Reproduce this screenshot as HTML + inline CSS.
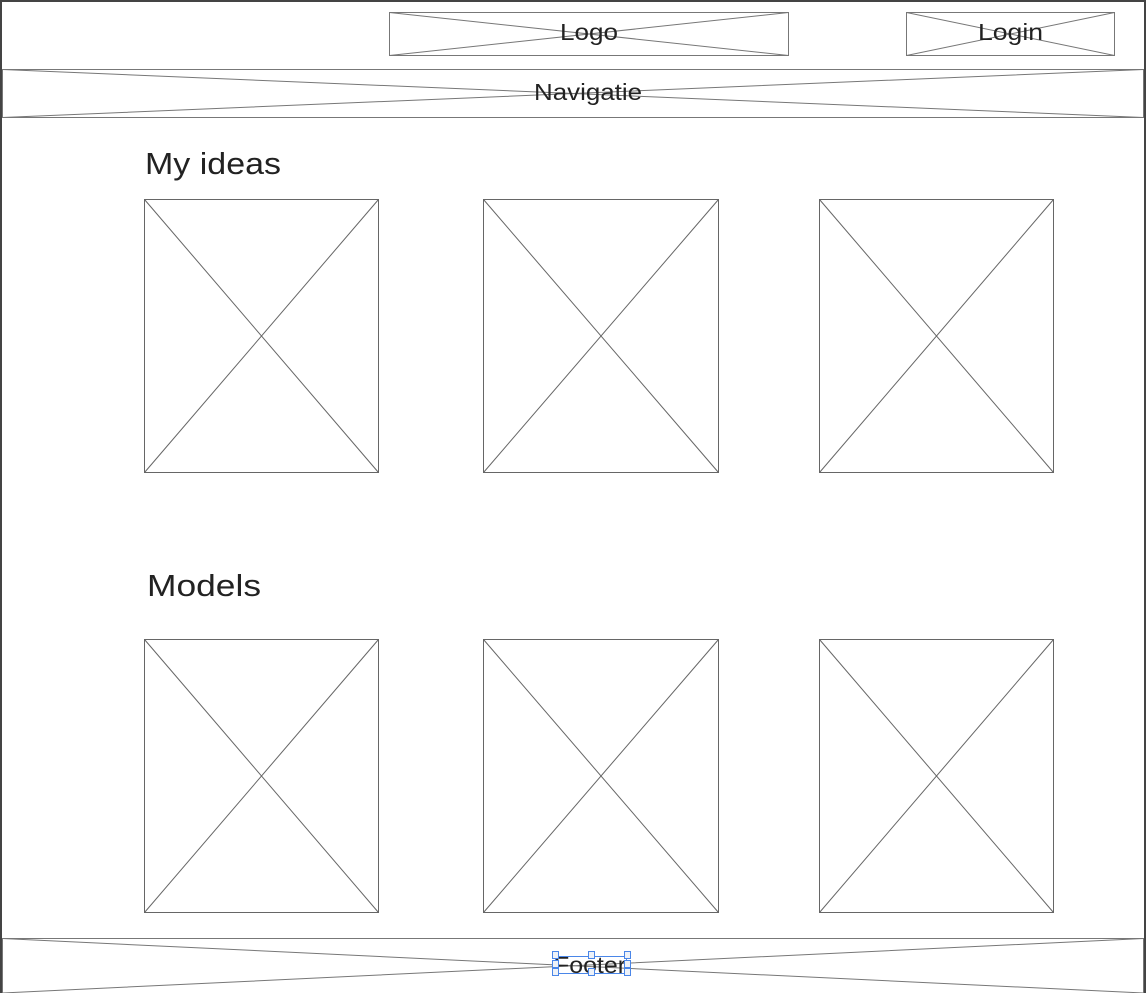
<!DOCTYPE html>
<html><head><meta charset="utf-8"><style>
html,body{margin:0;padding:0;background:#fff;}
svg{display:block}
text{font-family:"Liberation Sans",sans-serif;fill:#222;}
</style></head><body>
<svg width="1146" height="993" viewBox="0 0 1146 993" xmlns="http://www.w3.org/2000/svg">
<rect x="0" y="0" width="1146" height="993" fill="#fff"/>
<rect x="1" y="1" width="1144" height="1000" fill="none" stroke="#444" stroke-width="2"/>
<g fill="none" stroke="#777" stroke-width="1">
<rect x="389.5" y="12.5" width="399" height="43"/>
<path d="M389.5 12.5 L788.5 55.5 M788.5 12.5 L389.5 55.5"/>
<rect x="906.5" y="12.5" width="208" height="43"/>
<path d="M906.5 12.5 L1114.5 55.5 M1114.5 12.5 L906.5 55.5"/>
<rect x="2.5" y="69.5" width="1141" height="48"/>
<path d="M2.5 69.5 L1143.5 117.5 M1143.5 69.5 L2.5 117.5"/>
<rect x="2.5" y="938.5" width="1141" height="56"/>
<path d="M2.5 938.5 L1143.5 993 M1143.5 938.5 L2.5 993"/>
</g>
<g fill="none" stroke="#666" stroke-width="1">
<rect x="144.5" y="199.5" width="234" height="273"/><path d="M144.5 199.5 L378.5 472.5 M378.5 199.5 L144.5 472.5"/>
<rect x="483.5" y="199.5" width="235" height="273"/><path d="M483.5 199.5 L718.5 472.5 M718.5 199.5 L483.5 472.5"/>
<rect x="819.5" y="199.5" width="234" height="273"/><path d="M819.5 199.5 L1053.5 472.5 M1053.5 199.5 L819.5 472.5"/>
<rect x="144.5" y="639.5" width="234" height="273"/><path d="M144.5 639.5 L378.5 912.5 M378.5 639.5 L144.5 912.5"/>
<rect x="483.5" y="639.5" width="235" height="273"/><path d="M483.5 639.5 L718.5 912.5 M718.5 639.5 L483.5 912.5"/>
<rect x="819.5" y="639.5" width="234" height="273"/><path d="M819.5 639.5 L1053.5 912.5 M1053.5 639.5 L819.5 912.5"/>
</g>
<text x="560" y="40" font-size="23" textLength="58" lengthAdjust="spacingAndGlyphs">Logo</text>
<text x="978" y="40" font-size="23" textLength="65" lengthAdjust="spacingAndGlyphs">Login</text>
<text x="534" y="100" font-size="23" textLength="108" lengthAdjust="spacingAndGlyphs">Navigatie</text>
<text x="145" y="174" font-size="31" textLength="136" lengthAdjust="spacingAndGlyphs" fill="#111">My ideas</text>
<text x="147" y="596" font-size="31" textLength="114" lengthAdjust="spacingAndGlyphs" fill="#111">Models</text>
<text x="554" y="973" font-size="23" textLength="72" lengthAdjust="spacingAndGlyphs">Footer</text>
<g fill="#eef2f8" stroke="#4a86e8" stroke-width="1">
<rect x="555.5" y="956.5" width="71" height="17" fill="none"/>
<rect x="552.5" y="951.5" width="6" height="7"/><rect x="588.5" y="951.5" width="6" height="7"/><rect x="624.5" y="951.5" width="6" height="7"/>
<rect x="552.5" y="960.5" width="6" height="7"/><rect x="624.5" y="960.5" width="6" height="7"/>
<rect x="552.5" y="968.5" width="6" height="7"/><rect x="588.5" y="968.5" width="6" height="7"/><rect x="624.5" y="968.5" width="6" height="7"/>
</g>
</svg>
</body></html>
